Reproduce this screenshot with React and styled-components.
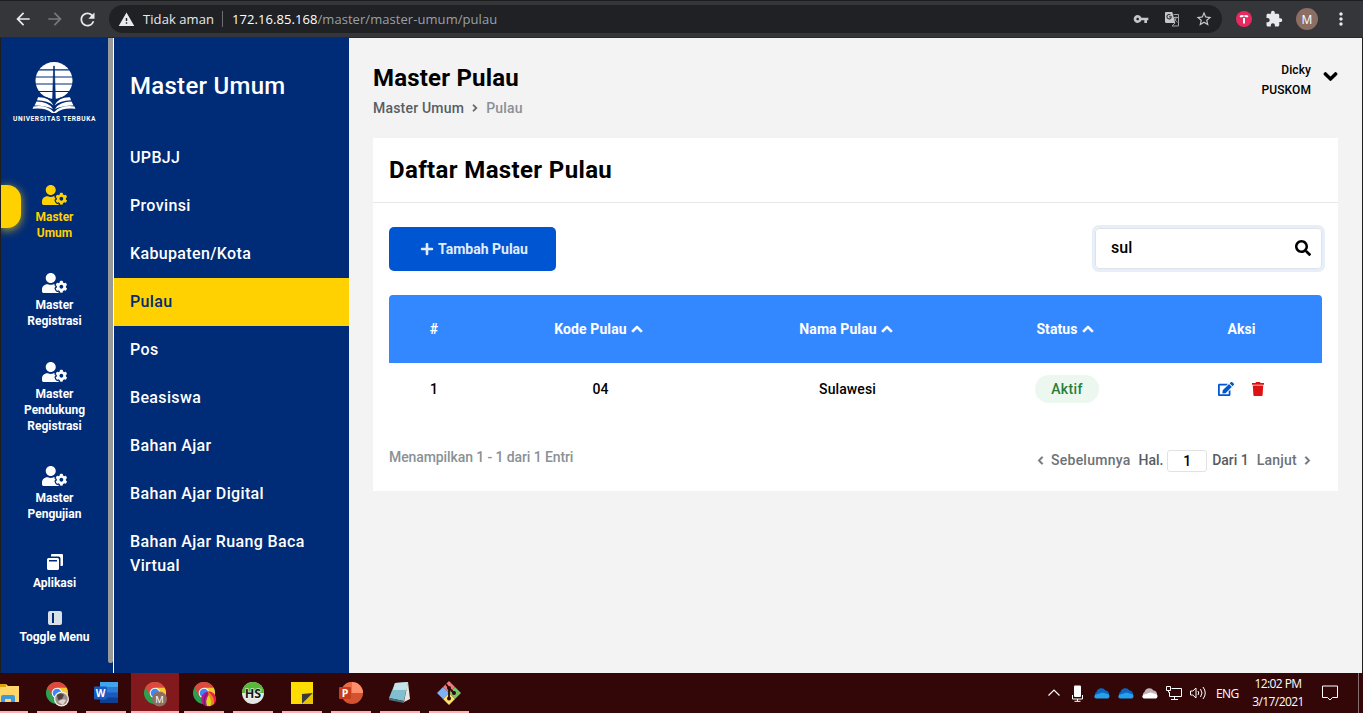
import React from "react";
import styled, { createGlobalStyle } from "styled-components";
import { FaUserCog, FaEdit, FaSearch, FaChevronDown, FaPlus, FaChevronUp, FaChevronLeft, FaChevronRight } from "react-icons/fa";
import { MdArrowBack, MdArrowForward, MdRefresh, MdWarning, MdVpnKey, MdStarBorder, MdExtension, MdMoreVert } from "react-icons/md";

const navy = "#002b76";
const yellow = "#ffd100";

const GlobalStyle = createGlobalStyle`
  * { box-sizing: border-box; }
  body { margin: 0; font-family: Roboto, "Liberation Sans", sans-serif; font-weight: 500; overflow: hidden; }
  svg { display: block; flex: none; }
`;

const Screen = styled.div`
  width: 1363px;
  height: 713px;
  display: flex;
  flex-direction: column;
  background: #f3f3f3;
`;

/* ---------- browser bar ---------- */
const BrowserBar = styled.header`
  height: 38px;
  flex: none;
  display: flex;
  align-items: center;
  background: #35363a;
  border-top: 1px solid #1d1e20;
  border-bottom: 1px solid #28292c;
  padding: 0 12px 0 13px;
  color: #e8eaed;
  font-family: "Open Sans", "Noto Sans", sans-serif;
  font-weight: 400;
`;
const NavButtons = styled.div`
  display: flex;
  gap: 12px;
  width: 96px;
`;
const AddressBar = styled.div`
  width: 1113px;
  height: 28px;
  border-radius: 14px;
  background: #202124;
  display: flex;
  align-items: center;
  padding: 0 9px;
  font-size: 13px;
`;
const Insecure = styled.span`
  margin-left: 8px;
  padding-right: 8px;
  border-right: 1px solid #6b6d70;
  line-height: 16px;
  letter-spacing: 0.08px;
`;
const Url = styled.span`
  margin-left: 9px;
  flex: 1;
  color: #9aa0a6;
  letter-spacing: 0.06px;
  b { color: #fff; font-weight: 400; }
`;
const AddressIcons = styled.div`
  display: flex;
  align-items: center;
  gap: 15px;
  color: #c5c7ca;
`;
const ExtensionIcons = styled.div`
  display: flex;
  flex: 1;
  align-items: center;
  justify-content: space-between;
  margin-left: 14px;
`;
const Avatar = styled.span`
  width: 22px;
  height: 22px;
  border-radius: 50%;
  background: #8d6e63;
  color: #fff;
  font-size: 12px;
  display: grid;
  place-items: center;
`;

/* ---------- page ---------- */
const Page = styled.div`
  flex: 1;
  min-height: 0;
  display: flex;
  border-left: 1px solid #1e1e1e;
  border-right: 1px solid #1e1e1e;
`;
const Rail = styled.nav`
  width: 107px;
  background: ${navy};
  display: flex;
  flex-direction: column;
  align-items: center;
  padding-top: 24px;
`;
const Scrollbar = styled.div`
  width: 6px;
  background: ${navy};
  border-right: 1px solid #fff;
  &::before { content: ""; display: block; height: 625px; background: #999; border-radius: 0 0 2px 2px; }
`;
const Brand = styled.div`
  height: 123px;
  display: flex;
  flex-direction: column;
  align-items: center;
  color: #fff;
  font-size: 6.6px;
  font-weight: 700;
  letter-spacing: 0.58px;
  line-height: 8px;
  white-space: nowrap;
  svg { margin-bottom: 2px; }
`;
const RailItem = styled.a`
  position: relative;
  width: 100%;
  height: ${(p) => p.$h}px;
  display: flex;
  flex-direction: column;
  align-items: center;
  color: ${(p) => (p.$active ? yellow : "#fff")};
  font-size: 12px;
  font-weight: 700;
  line-height: 16px;
  text-align: center;
  svg { margin-bottom: ${(p) => p.$gap ?? 4}px; }
`;
const RailIcon = styled(FaUserCog)`
  width: 25px;
  height: 20px;
`;
const ActiveMark = styled.span`
  position: absolute;
  left: 0;
  top: 0;
  width: 20px;
  height: 43px;
  border-radius: 0 14px 14px 0;
  background: ${yellow};
  box-shadow: 0 2px 10px rgba(255, 209, 0, 0.75);
  clip-path: inset(-20px -20px -20px 0);
`;
const SubMenu = styled.aside`
  width: 235px;
  background: ${navy};
  color: #fff;
`;
const SubTitle = styled.h2`
  margin: 0;
  height: 96px;
  padding: 0 16px;
  font-size: 24px;
  font-weight: 500;
  line-height: 96px;
  letter-spacing: 0.28px;
`;
const SubList = styled.ul`
  margin: 0;
  padding: 0;
  list-style: none;
`;
const SubItem = styled.li`
  padding: 12px 16px;
  font-size: 16px;
  line-height: 24px;
  letter-spacing: 0.35px;
  background: ${(p) => (p.$active ? yellow : "transparent")};
  color: ${(p) => (p.$active ? navy : "#fff")};
`;
const Content = styled.main`
  flex: 1;
  min-width: 0;
  padding: 0 24px;
  background: #f3f3f3;
`;
const TopRow = styled.div`
  height: 100px;
  display: flex;
  justify-content: space-between;
`;
const PageTitle = styled.h1`
  margin: 24px 0 0;
  font-size: 24px;
  font-weight: 700;
  line-height: 32px;
  letter-spacing: 0.2px;
`;
const Crumbs = styled.div`
  display: flex;
  align-items: center;
  gap: 7px;
  margin-top: 4px;
  font-size: 14px;
  line-height: 20px;
  letter-spacing: 0.2px;
  color: #575d63;
  span { color: #8a9097; }
`;
const User = styled.div`
  display: flex;
  gap: 12px;
  height: 40px;
  margin-top: 22px;
  align-items: center;
  text-align: right;
  font-size: 12px;
  line-height: 20px;
  letter-spacing: 0.1px;
  svg { margin-top: -7px; }
`;
const Card = styled.section`
  height: 353px;
  background: #fff;
`;
const CardTitle = styled.h2`
  margin: 0;
  height: 65px;
  padding: 0 16px;
  border-bottom: 1px solid #e6e7e9;
  font-size: 24px;
  line-height: 64px;
  font-weight: 700;
  letter-spacing: 0.36px;
`;
const Tools = styled.div`
  display: flex;
  justify-content: space-between;
  padding: 24px 16px;
`;
const AddButton = styled.button`
  width: 167px;
  height: 44px;
  display: flex;
  align-items: center;
  justify-content: center;
  gap: 4px;
  padding: 0 0 0 3px;
  border: 0;
  border-radius: 5px;
  background: #0055d2;
  color: #e3ecfb;
  font: 700 14px Roboto, sans-serif;
`;
const SearchBox = styled.label`
  width: 227px;
  height: 41px;
  margin-top: 1px;
  display: flex;
  align-items: center;
  justify-content: space-between;
  padding: 0 10px 2px 15px;
  border: 1px solid #dfe3e9;
  border-radius: 4px;
  box-shadow: 0 0 0 3px #e6eefa;
  font-size: 16px;
  letter-spacing: 0.1px;
`;
const Table = styled.div`
  margin: 0 16px;
  font-size: 14px;
`;
const Row = styled.div`
  display: grid;
  grid-template-columns: 90px 243px 251px 188px 161px;
  align-items: center;
  justify-items: center;
  height: ${(p) => (p.$head ? 68 : 52)}px;
  border-radius: 4px 4px 0 0;
  background: ${(p) => (p.$head ? "#3388ff" : "#fff")};
  color: ${(p) => (p.$head ? "#fff" : "#000")};
  font-weight: ${(p) => (p.$head ? 700 : 500)};
  letter-spacing: 0.1px;
`;
const Cell = styled.span`
  display: flex;
  align-items: center;
  gap: ${(p) => p.$gap ?? 4}px;
  padding-right: ${(p) => p.$pr ?? 0}px;
`;
/* Chevrons are drawn with an extra outline, which gives them a heavier stroke. */
const heavy = `
  stroke: currentColor;
  stroke-width: 38px;
  stroke-linejoin: round;
  overflow: visible;
`;
const SortIcon = styled(FaChevronUp)`${heavy}`;
const DownIcon = styled(FaChevronDown)`${heavy}`;
const PrevIcon = styled(FaChevronLeft)`${heavy}`;
const NextIcon = styled(FaChevronRight)`${heavy}`;

const Pill = styled.span`
  width: 64px;
  height: 28px;
  border-radius: 14px;
  background: #ebf7ef;
  color: #287d3c;
  display: grid;
  place-items: center;
  letter-spacing: 0.35px;
`;
const Footer = styled.div`
  display: flex;
  justify-content: space-between;
  align-items: flex-start;
  margin: 32px 26px 0 16px;
  font-size: 14px;
  color: #6c7277;
  line-height: 20px;
`;
const Entries = styled.span`
  color: #8a9195;
  letter-spacing: -0.1px;
`;
const Pager = styled.div`
  display: flex;
  align-items: center;
  margin-top: 3px;
  height: 20px;
  letter-spacing: 0.25px;
  b { font-weight: 500; color: #565c61; letter-spacing: -0.05px; }
`;
const PageInput = styled.span`
  width: 40px;
  height: 22px;
  margin: 1px 5px 0 4px;
  border: 1px solid #e0e2e5;
  border-radius: 3px;
  color: #000;
  text-align: center;
  line-height: 21px;
`;
const PagerLink = styled.span`
  display: flex;
  align-items: center;
  gap: 6px;
  margin: ${(p) => p.$m};
`;

/* ---------- task bar ---------- */
const TaskBar = styled.footer`
  height: 40px;
  flex: none;
  display: flex;
  background: #330708;
  color: #fff;
  font-family: "Open Sans", "Noto Sans", sans-serif;
  font-weight: 400;
`;
const Apps = styled.div`
  display: flex;
  width: 1048px;
`;
const TaskButton = styled.div`
  width: ${(p) => p.$w ?? 49}px;
  height: 40px;
  margin: ${(p) => p.$m ?? 0};
  display: flex;
  flex-direction: column;
  align-items: ${(p) => p.$align ?? "center"};
  justify-content: space-between;
  padding-top: 8px;
  background: ${(p) => (p.$active ? "#82191c" : "transparent")};
  &::after {
    content: "";
    width: ${(p) => p.$bar ?? 40}px;
    height: 2px;
    background: #ffb0b0;
  }
`;
const Tray = styled.div`
  display: flex;
  align-items: center;
  flex: 1;
  font-size: 12px;
`;
const TrayIcons = styled.div`
  display: flex;
  align-items: center;
  gap: 8px;
`;
const Lang = styled.span`
  width: 24px;
  margin-left: 9px;
  letter-spacing: -0.6px;
`;
const Clock = styled.div`
  width: 70px;
  margin-left: 3px;
  text-align: center;
  line-height: 18px;
  letter-spacing: -0.6px;
  white-space: nowrap;
`;
const Notifications = styled.svg`
  margin-left: 8px;
`;
const ShowDesktop = styled.div`
  width: 5px;
  height: 40px;
  margin-left: auto;
  border-left: 1px solid #8a6f70;
`;

const TranslateIcon = () => (
  <svg width="16" height="16" viewBox="0 0 16 16">
    <path d="M1.500 1h6.800l3 11H2.500A1.500 1.500 0 0 1 1 10.500V1.500z" fill="#c5c7ca" />
    <path d="M5 5.800h2.300a2.200 2.200 0 1 1-.8-1.800" fill="none" stroke="#35363a" strokeWidth="1.100" />
    <path d="M9.500 3.500h5v11.500H8l3-3M10 6.500h4M12 5.500v1c0 2-1 3.500-2 4.500M10.500 7.500c.5 1.500 1.500 2.800 3 3.700" fill="none" stroke="#a2a4a8" />
  </svg>
);

const UniversityLogo = () => (
  <svg width="44" height="51" viewBox="0 0 44 51">
    <circle cx="22" cy="18.500" r="18.500" fill="#fff" />
    <path d="M3 7.800h38M2 15h40M2 22h40M3 29.500h38" stroke={navy} strokeWidth="1.200" />
    <path d="M20.600 38 21.700 4h.6L23.400 38z" fill={navy} stroke={navy} strokeWidth="0.700" />
    <path d="M-1 49 5 34q11-1 17 6 6-7 17-6l6 15-23 4z" fill={navy} />
    <path d="M6 35.300q11-.5 15.500 8.200-5.500-5-16.500-5.200zM38 35.300q-11-.5-15.500 8.200 5.500-5 16.500-5.200z" fill="#fff" />
    <path d="M4.500 39.500q12 0 16.500 7.500Q14 43.500 2.500 43.500zM39.500 39.500q-12 0-16.500 7.500 7-3.500 18.500-3.500z" fill="#fff" />
    <path d="M1.500 44.500q13-2 20.300 5.500h.4q7.300-7.500 20.300-5.500l1 2.300q-13-1.300-19.500 4.200h-4Q13.500 45.500.5 46.800z" fill="#fff" />
  </svg>
);

const WindowsIcon = () => (
  <svg width="16" height="16" viewBox="0 0 16 16">
    <path d="M5 0h10a1 1 0 0 1 1 1v10a1 1 0 0 1-1 1h-1.500V4.500a2 2 0 0 0-2-2H4V1a1 1 0 0 1 1-1z" fill="#fff" />
    <path fillRule="evenodd" d="M1.500 4h9A1.500 1.500 0 0 1 12 5.500v9a1.500 1.500 0 0 1-1.500 1.500h-9A1.500 1.500 0 0 1 0 14.500v-9A1.500 1.500 0 0 1 1.500 4zM2 6v1.400h8V6z" fill="#fff" />
  </svg>
);
const ToggleIcon = () => (
  <svg width="14" height="14" viewBox="0 0 14 14">
    <rect width="14" height="14" rx="2" fill="#dbdfe6" />
    <rect x="4" y="2" width="2" height="10" fill={navy} />
  </svg>
);
const TrashIcon = () => (
  <svg width="12" height="14" viewBox="0 0 12 14">
    <path d="M4 0h4l.5 1H12v1.800H0V1h3.500zM.8 3.600h10.400L10.600 13a1 1 0 0 1-1 1H2.400a1 1 0 0 1-1-1z" fill="#de1212" />
  </svg>
);

const Chrome = ({ badge }) => (
  <svg width="24" height="26" viewBox="0 0 24 26">
    <circle cx="12" cy="12" r="11" fill="#2da04f" />
    <path d="M12 6.500h9.530A11 11 0 0 1 12 23l4.800-8.300z" fill="#fcc934" />
    <path d="M2.470 6.500A11 11 0 0 1 21.530 6.500H12L7.200 14.700z" fill="#e0483e" />
    <circle cx="12" cy="12" r="5.300" fill="#fff" />
    <circle cx="12" cy="12" r="4.300" fill="#4285f4" />
    {badge}
  </svg>
);
const PhotoBadge = () => (
  <g>
    <circle cx="16.500" cy="18" r="7.500" fill="#f1efec" />
    <circle cx="16.500" cy="18" r="6.200" fill="#a08c86" />
    <path d="M12 14q4-3 7 0l-2 4-4 1z" fill="#4e413e" />
    <path d="M13 21q4-4 8-2l-3 5z" fill="#dcd5cf" />
  </g>
);
const LetterBadge = () => (
  <g>
    <circle cx="16.500" cy="18" r="7.500" fill="#8d6e63" />
    <text x="16.500" y="21.500" fill="#fff" fontSize="9.500" textAnchor="middle" fontFamily="Open Sans">M</text>
  </g>
);
const LeafBadge = () => (
  <g>
    <circle cx="16.500" cy="18" r="7.500" fill="#c3168a" />
    <path d="M16.500 10.500A7.500 7.500 0 0 1 22 23L16 12z" fill="#e8204a" />
    <path d="M16 10.500q7 5 6 12.500l-4 2z" fill="#f4801e" />
    <path d="M16.500 14q-3.500 5.500-1.500 11h3.500q2-5-2-11z" fill="#d8d919" />
    <path d="M15 12q-4 6-2.500 12" fill="none" stroke="#6b1a8a" strokeWidth="1.200" />
  </g>
);

const Cloud = ({ a, b }) => (
  <svg width="16" height="11" viewBox="0 0 16 11">
    <path d="M3 9.500A3 3 0 0 1 2.500 4 5 5 0 0 1 11.500 2.500 4 4 0 0 1 15 6l-1 4z" fill={a} />
    <path d="M2 10.500a2 2 0 0 1-.5-3.800L8.500 4.500l6 1.700A2.500 2.500 0 0 1 14 10.500z" fill={b} />
  </svg>
);

const railItems = [
  { label: ["Master", "Umum"], h: 88.4, active: true },
  { label: ["Master", "Registrasi"], h: 88.4 },
  { label: ["Master", "Pendukung", "Registrasi"], h: 104.4 },
  { label: ["Master", "Pengujian"], h: 87.8 },
];
const menu = ["UPBJJ", "Provinsi", "Kabupaten/Kota", "Pulau", "Pos", "Beasiswa", "Bahan Ajar", "Bahan Ajar Digital", "Bahan Ajar Ruang Baca Virtual"];

export default function App() {
  return (
    <Screen>
      <GlobalStyle />
      <BrowserBar>
        <NavButtons>
          <MdArrowBack size={20} />
          <MdArrowForward size={20} color="#77797c" />
          <MdRefresh size={21} />
        </NavButtons>
        <AddressBar>
          <MdWarning size={17} />
          <Insecure>Tidak aman</Insecure>
          <Url><b>172.16.85.168</b>/master/master-umum/pulau</Url>
          <AddressIcons>
            <MdVpnKey size={16} />
            <TranslateIcon />
            <MdStarBorder size={18} />
          </AddressIcons>
        </AddressBar>
        <ExtensionIcons>
          <svg width="16" height="16" viewBox="0 0 16 16">
            <circle cx="8" cy="8" r="8" fill="#e62a5f" />
            <path d="M4 5.800q2-1.300 3.500-.3M12 5.800q-2-1.300-3.500-.3" fill="none" stroke="#fff" strokeWidth="1.900" />
            <path d="M8 7v5.500" stroke="#fff" strokeWidth="2" />
          </svg>
          <MdExtension size={18} />
          <Avatar>M</Avatar>
          <MdMoreVert size={20} />
        </ExtensionIcons>
      </BrowserBar>

      <Page>
        <Rail>
          <Brand>
            <UniversityLogo />
            UNIVERSITAS TERBUKA
          </Brand>
          {railItems.map((item, i) => (
            <RailItem key={i} $h={item.h} $active={item.active}>
              {item.active && <ActiveMark />}
              <RailIcon />
              {item.label.map((line) => <span key={line}>{line}</span>)}
            </RailItem>
          ))}
          <RailItem $h={57} $gap={5}><WindowsIcon />Aplikasi</RailItem>
          <RailItem $h={50}><ToggleIcon />Toggle Menu</RailItem>
        </Rail>
        <Scrollbar />
        <SubMenu>
          <SubTitle>Master Umum</SubTitle>
          <SubList>
            {menu.map((name) => (
              <SubItem key={name} $active={name === "Pulau"}>{name}</SubItem>
            ))}
          </SubList>
        </SubMenu>
        <Content>
          <TopRow>
            <div>
              <PageTitle>Master Pulau</PageTitle>
              <Crumbs>Master Umum <NextIcon size={8} /> <span>Pulau</span></Crumbs>
            </div>
            <User>
              <div>Dicky<br />PUSKOM</div>
              <DownIcon size={15} />
            </User>
          </TopRow>
          <Card>
            <CardTitle>Daftar Master Pulau</CardTitle>
            <Tools>
              <AddButton><FaPlus size={14} />Tambah Pulau</AddButton>
              <SearchBox>sul<FaSearch size={16} /></SearchBox>
            </Tools>
            <Table>
              <Row $head>
                <Cell>#</Cell>
                <Cell $pr={4}>Kode Pulau <SortIcon size={12} /></Cell>
                <Cell $pr={3}>Nama Pulau <SortIcon size={12} /></Cell>
                <Cell $pr={4}>Status <SortIcon size={12} /></Cell>
                <Cell>Aksi</Cell>
              </Row>
              <Row>
                <Cell>1</Cell>
                <Cell>04</Cell>
                <Cell>Sulawesi</Cell>
                <Pill>Aktif</Pill>
                <Cell $gap={18} $pr={2}><FaEdit size={16} color="#0055d2" /><TrashIcon /></Cell>
              </Row>
            </Table>
            <Footer>
              <Entries>Menampilkan 1 - 1 dari 1 Entri</Entries>
              <Pager>
                <PagerLink $m="0 8px 0 0"><PrevIcon size={9} />Sebelumnya</PagerLink>
                <b>Hal.</b>
                <PageInput>1</PageInput>
                <b>Dari 1</b>
                <PagerLink $m="0 0 0 8px">Lanjut<NextIcon size={9} /></PagerLink>
              </Pager>
            </Footer>
          </Card>
        </Content>
      </Page>

      <TaskBar>
        <Apps>
          <TaskButton $w={28} $bar={28} $m="0 4.5px 0 0" $align="flex-start">
            <svg width="19" height="24" viewBox="0 0 19 24">
              <path d="M0 3h6l2 2h11v16H0z" fill="#ffd667" />
              <path d="M0 3h6v3H0z" fill="#e0a010" />
              <path d="M1 21v-5q0-2 2-2h10q2 0 2 2v5h-4v-3H5v3z" fill="#3d9bdc" />
            </svg>
          </TaskButton>
          <TaskButton><Chrome badge={<PhotoBadge />} /></TaskButton>
          <TaskButton>
            <svg width="24" height="24" viewBox="0 0 24 24">
              <path d="M6 1h18v6H6z" fill="#41a5ee" /><path d="M6 6h18v6H6z" fill="#2b7cd3" />
              <path d="M6 11.500h18V17H6z" fill="#185abd" /><path d="M6 16.500h18V22H6z" fill="#103f91" />
              <rect y="5.500" width="13" height="13" rx="1" fill="#185abd" />
              <text x="6.500" y="16" fill="#fff" fontSize="10" fontWeight="700" textAnchor="middle" fontFamily="Open Sans">W</text>
            </svg>
          </TaskButton>
          <TaskButton $active $w={48} $bar={48} $m="0 .5px"><Chrome badge={<LetterBadge />} /></TaskButton>
          <TaskButton><Chrome badge={<LeafBadge />} /></TaskButton>
          <TaskButton>
            <svg width="24" height="24" viewBox="0 0 24 24">
              <circle cx="12" cy="12" r="11" fill="#e4e6e2" />
              <path d="M1 12a11 11 0 0 1 22 0z" fill="#58b837" />
              <text x="12" y="16.500" fill="#161616" fontSize="12.500" fontWeight="700" textAnchor="middle" fontFamily="Open Sans" stroke="#fff" strokeWidth="1.200" paintOrder="stroke">HS</text>
            </svg>
          </TaskButton>
          <TaskButton>
            <svg width="22" height="24" viewBox="0 0 22 24">
              <path d="M0 1h22v22H0z" fill="#ffdc00" />
              <path d="M11 23V13l11-1z" fill="#3b3b3b" />
              <path d="M11 23 22 12v11z" fill="#e9c400" />
            </svg>
          </TaskButton>
          <TaskButton>
            <svg width="24" height="24" viewBox="0 0 24 24">
              <circle cx="13" cy="12" r="11" fill="#d35230" />
              <path d="M13 1a11 11 0 0 1 11 11H13z" fill="#ff8f6b" /><path d="M13 1v11H2A11 11 0 0 1 13 1z" fill="#ed6c47" />
              <rect y="6" width="12" height="12" rx="1" fill="#c43e1c" />
              <text x="6" y="16" fill="#fff" fontSize="10.500" fontWeight="700" textAnchor="middle" fontFamily="Open Sans">P</text>
            </svg>
          </TaskButton>
          <TaskButton>
            <svg width="24" height="24" viewBox="0 0 24 24">
              <path d="M7 2 20 1 16 20 1 17z" fill="#7fbfd0" /><path d="M7 2 20 1 18.500 9 5 9z" fill="#c5e3ea" />
              <path d="M20 1l2 17-6 3z" fill="#e8e6df" /><path d="M1 17l15 3v2L1 19z" fill="#47717c" />
            </svg>
          </TaskButton>
          <TaskButton>
            <svg width="24" height="24" viewBox="0 0 24 24">
              <path d="M12 0l6 6-6 6-6-6z" fill="#f07a78" /><path d="M6 6l6 6-6 6-6-6z" fill="#7fb0f7" />
              <path d="M18 6l6 6-6 6-6-6z" fill="#7ac36a" /><path d="M12 12l6 6-6 6-6-6z" fill="#fde06c" />
              <path d="M9 3l3 4v11M12 7l5 5" fill="none" stroke="#2c0b0b" strokeWidth="1.800" />
              <circle cx="12" cy="7" r="2" fill="#2c0b0b" /><circle cx="17" cy="12" r="2" fill="#2c0b0b" /><circle cx="12" cy="17.500" r="2" fill="#2c0b0b" />
            </svg>
          </TaskButton>
        </Apps>
        <Tray>
          <TrayIcons>
            <svg width="14" height="10" viewBox="0 0 14 10"><path d="M0.500 7.500 6 2l5.500 5.500" fill="none" stroke="#fff" strokeWidth="1.200" /></svg>
            <svg width="16" height="17" viewBox="0 0 16 17">
              <rect x="4" y="0.500" width="7" height="11.500" rx="1" fill="#fff" />
              <path d="M2.500 10v4h10v-4M7.500 14v2M4.500 16.300h6" fill="none" stroke="#fff" />
            </svg>
            <Cloud a="#0a66c2" b="#27a0ec" />
            <Cloud a="#0a66c2" b="#27a0ec" />
            <Cloud a="#bfb3b3" b="#fff" />
            <svg width="16" height="15" viewBox="0 0 16 15">
              <path d="M5.500 2.500h10v8h-12V6M8.500 10.500v3M5 13.500h7M.5.500h4v4h-4zM2.500 4.500v2" fill="none" stroke="#fff" />
            </svg>
            <svg width="17" height="14" viewBox="0 0 17 14">
              <path d="M.5 5v4h2.300L6 12V2L2.800 5zM8 5q1.500 2 0 4M10.500 3q3 4 0 8M13 1q4.500 6 0 12" fill="none" stroke="#fff" />
            </svg>
          </TrayIcons>
          <Lang>ENG</Lang>
          <Clock>12:02 PM<br />3/17/2021</Clock>
          <Notifications width="18" height="18" viewBox="0 0 18 18">
            <path d="M1.500 2h15v11.500h-5L9 16l-2.500-2.500h-5z" fill="none" stroke="#fff" />
          </Notifications>
          <ShowDesktop />
        </Tray>
      </TaskBar>
    </Screen>
  );
}
